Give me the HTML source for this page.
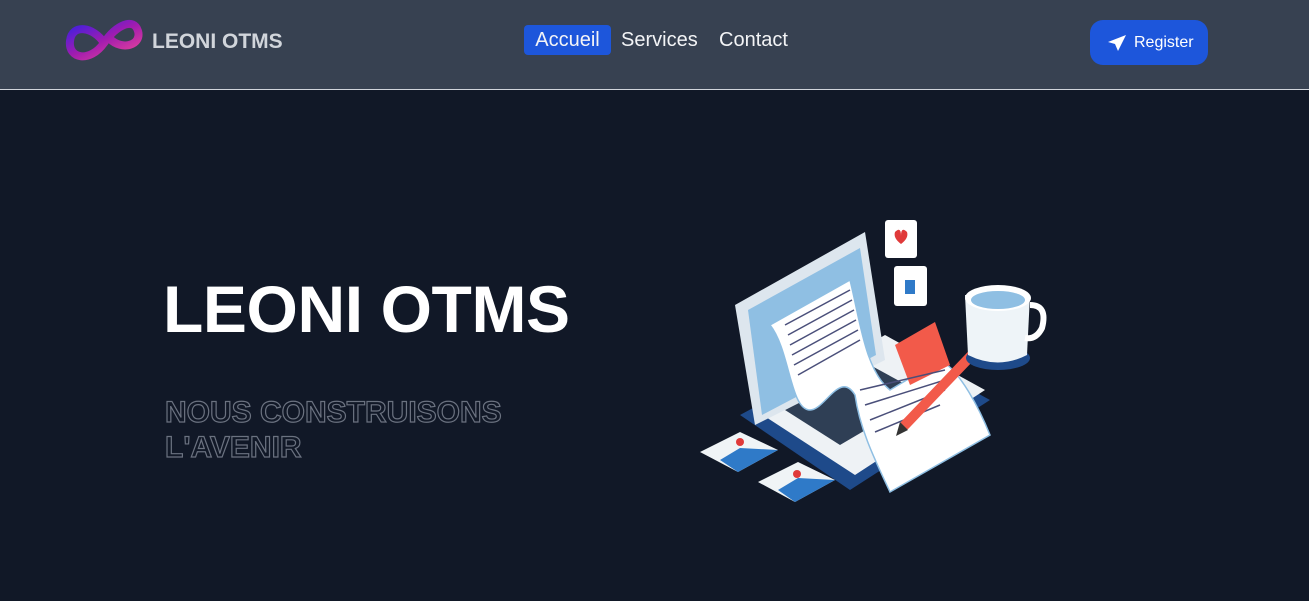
<!DOCTYPE html>
<html><head><meta charset="utf-8"><style>
*{margin:0;padding:0;box-sizing:border-box}
body{width:1309px;height:601px;background:#111827;font-family:"Liberation Sans",sans-serif;overflow:hidden;position:relative}
header{position:absolute;left:0;top:0;width:1309px;height:90px;background:#374151;border-bottom:1px solid #d1d5db}
.brand{position:absolute;left:152px;top:30px;color:#d1d5db;font-size:21px;font-weight:bold}
.nav a{position:absolute;top:25px;height:30px;line-height:31px;color:#f3f4f6;font-size:20px;text-decoration:none}
.btn{position:absolute;left:1090px;top:20px;width:118px;height:45px;background:#1d56db;border-radius:13px;color:#fff;font-size:16px}
h1{position:absolute;left:163px;top:271px;color:#fff;font-size:66px;font-weight:bold;letter-spacing:-0.4px}
.sub{position:absolute;left:165px;top:395px;font-size:30px;font-weight:bold;line-height:35px;color:transparent;-webkit-text-stroke:1.2px #6b7280}
</style></head><body>
<header>
<svg style="position:absolute;left:64px;top:17px" width="80" height="52" viewBox="0 0 80 52">
<defs><linearGradient id="g" x1="0" y1="0" x2="1" y2="1"><stop offset="0" stop-color="#3b1fe0"/><stop offset=".5" stop-color="#a21caf"/><stop offset="1" stop-color="#ec4899"/></linearGradient></defs>
<path d="M40 26 C30 10 8 6 6 24 C4 42 26 46 40 26 C52 8 70 0 74 14 C78 28 58 34 46 22" fill="none" stroke="url(#g)" stroke-width="8" stroke-linecap="round"/>
</svg>
<div class="brand">LEONI OTMS</div>
<div class="nav">
<a style="left:524px;width:87px;background:#1d56db;border-radius:4px;text-align:center">Accueil</a>
<a style="left:621px">Services</a>
<a style="left:719px">Contact</a>
</div>
<div class="btn">
<svg style="position:absolute;left:17px;top:14px" width="20" height="18" viewBox="0 0 20 18"><path d="M19 1 L1 8 L8 10 L11 17 Z" fill="#fff"/></svg>
<span style="position:absolute;left:44px;top:14px">Register</span>
</div>
</header>
<h1>LEONI OTMS</h1>
<div class="sub">NOUS CONSTRUISONS<br>L'AVENIR</div>
<svg style="position:absolute;left:680px;top:210px" width="380" height="310" viewBox="0 0 380 310">
<polygon points="60,205 200,130 310,190 170,280" fill="#1e4a8a"/>
<polygon points="75,200 205,125 305,180 175,265" fill="#eef2f5"/>
<polygon points="105,200 190,155 245,185 160,235" fill="#2f3f55"/>
<polygon points="55,95 185,22 205,150 75,215" fill="#dde6ee"/>
<polygon points="68,100 180,38 196,145 82,205" fill="#8fbfe3"/>
<path d="M90 115 L170 70 C180 110 185 160 210 180 L260 150 C280 160 300 200 310 225 L210 282 C195 250 180 220 175 185 C160 160 145 200 130 200 C110 200 110 140 90 115Z" fill="#fff" stroke="#8fbfe3" stroke-width="1.5"/>
<polygon points="215,135 255,112 270,155 230,175" fill="#f25a4a"/>
<g stroke="#4a4f7a" stroke-width="1.5">
<line x1="105" y1="115" x2="170" y2="80"/><line x1="108" y1="125" x2="172" y2="90"/><line x1="110" y1="135" x2="174" y2="100"/><line x1="112" y1="145" x2="176" y2="110"/><line x1="114" y1="155" x2="178" y2="120"/><line x1="118" y1="165" x2="180" y2="130"/>
<line x1="180" y1="180" x2="265" y2="160"/><line x1="185" y1="195" x2="265" y2="170"/><line x1="190" y1="210" x2="265" y2="180"/><line x1="195" y1="222" x2="260" y2="195"/>
</g>
<line x1="225" y1="215" x2="330" y2="105" stroke="#f25a4a" stroke-width="10" stroke-linecap="round"/>
<polygon points="220,212 228,220 216,226" fill="#333"/>
<ellipse cx="318" cy="148" rx="32" ry="12" fill="#1e4a8a"/>
<path d="M285 85 L288 145 Q318 160 347 145 L350 85Z" fill="#eef4f8"/>
<ellipse cx="318" cy="88" rx="33" ry="13" fill="#fff"/>
<ellipse cx="318" cy="90" rx="27" ry="9" fill="#8fbfe3"/>
<path d="M350 95 Q368 95 362 118 Q356 130 345 128" fill="none" stroke="#fff" stroke-width="6"/>
<rect x="205" y="10" width="32" height="38" rx="3" fill="#fff"/>
<path d="M215 22 q6 -6 6 4 q0 -10 6 -4 q2 6 -6 12 q-8 -6 -6 -12Z" fill="#e03a3a"/>
<rect x="214" y="56" width="33" height="40" rx="3" fill="#fff"/>
<rect x="225" y="70" width="10" height="14" fill="#2f7ac8"/>
<polygon points="20,242 60,222 98,240 58,262" fill="#f0f4f6"/>
<polygon points="40,250 60,238 98,240 58,262" fill="#2f7ac8"/>
<circle cx="60" cy="232" r="4" fill="#e03a3a"/>
<polygon points="78,272 118,252 155,270 115,292" fill="#f0f4f6"/>
<polygon points="98,280 118,268 155,270 115,292" fill="#2f7ac8"/>
<circle cx="117" cy="264" r="4" fill="#e03a3a"/>
</svg>
</body></html>
